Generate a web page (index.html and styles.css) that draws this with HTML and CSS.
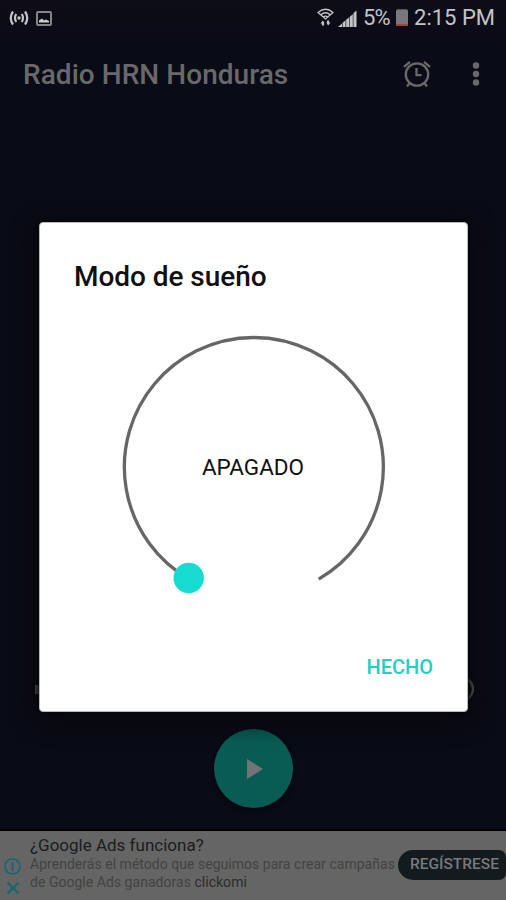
FILE: index.html
```html
<!DOCTYPE html>
<html lang="es">
<head>
  <meta charset="UTF-8">
  <meta name="viewport" content="width=device-width, initial-scale=1.0">
  <title>Radio HRN Honduras</title>
  <link rel="stylesheet" href="styles.css">
</head>
<body>
  <div class="screen">
    <div class="status-bar">
      <svg class="icon-cast" width="20" height="16" viewBox="0 0 20 16" fill="none" stroke="currentColor" stroke-width="2.2">
        <path d="M4 1.500Q-.500 8 4 14.500M7.200 4Q4.800 8 7.200 12M16 1.500Q20.500 8 16 14.500M12.800 4Q15.200 8 12.800 12"/>
        <circle cx="10" cy="8" r="1.700" fill="currentColor" stroke="none"/>
      </svg>
      <svg class="icon-image" width="16" height="15" viewBox="0 0 16 15">
        <rect x="1" y="1" width="14" height="13" rx="1" fill="none" stroke="#858589" stroke-width="2"/>
        <path d="M3 11.500V9.500l3-2 2 2 2-1 3 1.500v1.500z" fill="#d0d0d3"/>
      </svg>
      <div class="status-right">
        <svg class="icon-wifi" width="17" height="18" viewBox="0 0 17 18" fill="none" stroke="currentColor">
          <path d="M1 4.500Q8.500-2 16 4.500L8.500 11zM3.500 7Q8.500 2.500 13.500 7M6 9.300Q8.500 7 11 9.300" stroke-width="1.300"/>
          <path d="M6 17.500v-4M11 12.500v4" stroke-width="2.200"/>
          <path d="M3.500 15.500L6 12.500v3zM13.500 14.500L11 17.500v-3z" fill="currentColor" stroke="none"/>
        </svg>
        <svg class="icon-signal" width="19" height="17" viewBox="0 0 19 17" fill="currentColor">
          <path d="M0 17l4-3.500V17zM4.600 12.800l3-2.500V17h-3zM8.200 9.700l3-2.500V17h-3zM11.800 6.700l3-2.500V17h-3zM15.400 3.300L18.500.5V17h-3.100z"/>
        </svg>
        <span class="percent">5%</span>
        <span class="battery"></span>
        <span class="clock">2:15 PM</span>
      </div>
    </div>

    <div class="toolbar">
      <h1>Radio HRN Honduras</h1>
      <svg class="icon-alarm" width="28" height="28" viewBox="0 0 28 28" fill="none" stroke="currentColor" stroke-width="2.300">
        <circle cx="14" cy="14.500" r="11.200"/>
        <path d="M13.500 8v7.200h5M1 6.800l6-5M27 6.800l-6-5M7 22.500l-3 4M21 22.500l3 4"/>
      </svg>
      <svg class="icon-more" width="8" height="24" viewBox="0 0 8 24" fill="currentColor">
        <circle cx="4" cy="3.500" r="3.200"/><circle cx="4" cy="12" r="3.200"/><circle cx="4" cy="20.500" r="3.200"/>
      </svg>
    </div>

    <div class="player">
      <div class="volume">
        <span class="speaker"></span>
        <svg width="26" height="26" viewBox="0 0 26 26" fill="none" stroke="currentColor" stroke-width="2.400">
          <path d="M18 1.500Q32 13 18 24.500"/>
        </svg>
      </div>
      <div class="play">
        <svg width="18" height="20" viewBox="0 0 18 20"><path d="M1 0l16 10L1 20z" fill="#737276"/></svg>
      </div>
    </div>

    <div class="ad">
      <div class="ad-icons">
        <svg width="17" height="17" viewBox="0 0 17 17" fill="none" stroke="currentColor">
          <circle cx="8.500" cy="8.500" r="7.600" stroke-width="1.500"/>
          <path d="M8.500 4v9" stroke-width="2"/>
        </svg>
        <svg width="14" height="14" viewBox="0 0 14 14" fill="none" stroke="currentColor" stroke-width="2">
          <path d="M1.500 1.500l11 11M12.500 1.500l-11 11"/>
        </svg>
      </div>
      <div class="ad-text">
        <p class="ad-title">¿Google Ads funciona?</p>
        <p class="ad-line">Aprenderás el método que seguimos para crear campañas</p>
        <p class="ad-line ad-second">de Google Ads ganadoras <span>clickomi</span></p>
      </div>
      <div class="ad-button">REGÍSTRESE</div>
    </div>

    <div class="dialog">
      <h2>Modo de sueño</h2>
      <div class="dial">
        <svg width="290" height="290" viewBox="0 0 290 290">
          <path d="M80 257.100A129.500 129.500 0 1 1 209.700 257.100" fill="none" stroke="#666" stroke-width="3.300"/>
          <circle cx="79.700" cy="256" r="15.200" fill="#16dbd0"/>
        </svg>
        <span class="dial-label">APAGADO</span>
      </div>
      <div class="actions">HECHO</div>
    </div>
  </div>
</body>
</html>
```

FILE: styles.css
```css
* {
  box-sizing: border-box;
}

body {
  margin: 0;
  font-family: Roboto, sans-serif;
  background: #090b16;
}

h1, h2, p {
  margin: 0;
  font-weight: 500;
  white-space: nowrap;
}

svg {
  display: block;
  flex-shrink: 0;
}

.screen {
  position: relative;
  display: flex;
  flex-direction: column;
  width: 506px;
  height: 900px;
  overflow: hidden;
  background: linear-gradient(#0e0d18, #090b16 45px, #090b16);
}

.status-bar {
  display: flex;
  align-items: center;
  height: 36px;
  padding: 0 11px 0 9px;
  color: #c4c4c8;
}

.icon-image {
  margin-left: 7px;
}

.status-right {
  display: flex;
  align-items: center;
  margin-left: auto;
  font-size: 22px;
  line-height: 38px;
}

.icon-wifi {
  margin-top: -3px;
}

.icon-signal {
  margin-left: 4px;
}

.percent {
  width: 28px;
  margin-left: 6px;
  letter-spacing: -0.8px;
}

.battery {
  width: 12px;
  height: 17px;
  margin: 0 6px 2px 5px;
  border-top: 1px solid #555559;
  border-bottom: 2px solid #a34236;
  border-radius: 2px 2px 0 0;
  background: #77777c;
}

.toolbar {
  display: flex;
  align-items: center;
  height: 76px;
  padding: 0 26px 0 23px;
  color: #69696b;
}

.toolbar h1 {
  font-size: 28px;
  letter-spacing: 0.05px;
}

.icon-alarm {
  margin-left: auto;
}

.icon-more {
  margin-left: 41px;
}

.player {
  display: flex;
  flex: 1;
  flex-direction: column;
  align-items: center;
  justify-content: flex-end;
  padding-bottom: 21px;
}

.volume {
  display: flex;
  align-items: center;
  justify-content: space-between;
  width: 441px;
  margin-bottom: 27px;
  color: #6d6d70;
}

.speaker {
  width: 8px;
  height: 9px;
  margin-left: 2px;
  background: #69696c;
}

.play {
  display: flex;
  align-items: center;
  justify-content: center;
  width: 79px;
  height: 79px;
  margin-left: 1px;
  padding-left: 3px;
  border-radius: 50%;
  background: #095c54;
  box-shadow: 0 2px 5px #05060c;
}

.ad {
  display: flex;
  height: 71px;
  border-top: 2px solid #000;
  background: #656565;
}

.ad-icons {
  display: flex;
  flex-direction: column;
  align-items: center;
  gap: 6px;
  width: 25px;
  padding-top: 27px;
  color: #126873;
}

.ad-text {
  width: 373px;
  padding: 5px 0 0 5px;
}

.ad-title {
  color: #1c1c1c;
  font-size: 17px;
  font-weight: 400;
  line-height: 19px;
}

.ad-line {
  color: #434343;
  font-size: 14px;
  font-weight: 400;
  letter-spacing: 0.03px;
  line-height: 18px;
}

.ad-second {
  line-height: 19px;
}

.ad-second span {
  color: #2c2c2c;
}

.ad-button {
  flex-shrink: 0;
  width: 108px;
  height: 30px;
  margin-top: 19px;
  padding-left: 12px;
  border-radius: 15px 7px 7px 15px;
  background: #141b1f;
  color: #777a7c;
  font-size: 15.5px;
  font-weight: 500;
  line-height: 29px;
}

/* Sleep timer dialog, laid over the player */
.dialog {
  position: absolute;
  top: 222px;
  left: 39px;
  width: 429px;
  height: 490px;
  padding: 36px 34px 0;
  border: 1px solid #b9b9b9;
  border-radius: 4px;
  background: #fff;
  box-shadow: 0 6px 22px 4px #08080c, 0 0 4px #000;
}

.dialog h2 {
  color: #101010;
  font-size: 28px;
  letter-spacing: -0.05px;
  line-height: 36px;
}

.dial {
  display: grid;
  place-items: center;
  width: 290px;
  height: 290px;
  margin: 27px 0 0 35px;
}

.dial > * {
  grid-area: 1 / 1;
}

.dial-label {
  margin-right: 2px;
  color: #111;
  font-size: 22.5px;
}

.actions {
  margin-top: 41px;
  color: #20d0c3;
  font-size: 20px;
  font-weight: 500;
  line-height: 28px;
  text-align: right;
}
```
